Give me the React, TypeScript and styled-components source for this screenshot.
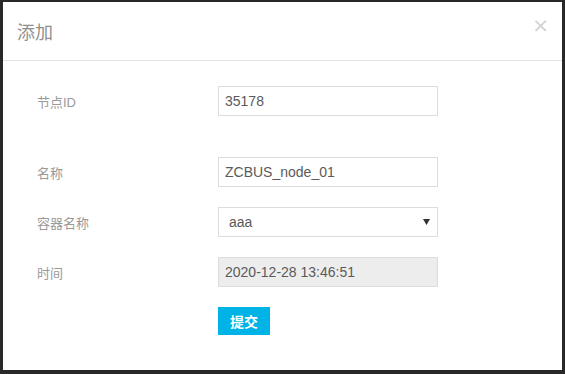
import React from "react";
import styled, { createGlobalStyle } from "styled-components";

const Global = createGlobalStyle`
  html, body { margin: 0; padding: 0; background: #2a2a2a; }
  body { font-family: "Liberation Sans", "Noto Sans CJK SC", Arial, sans-serif; }
  * { box-sizing: border-box; }
`;

const Backdrop = styled.div`
  width: 565px;
  height: 374px;
  padding: 2px 3px 0 3px;
  background: #282828;
  overflow: hidden;
`;

const Modal = styled.div`
  width: 559px;
  height: 368px;
  background: #fff;
  display: flex;
  flex-direction: column;
`;

const Header = styled.div`
  height: 59px;
  border-bottom: 1px solid #e5e5e5;
  display: flex;
  align-items: center;
  justify-content: space-between;
  padding: 0 13px 4px 14px;
`;

const Title = styled.h4`
  margin: 0;
  font-size: 18px;
  font-weight: normal;
  color: #8f8f8f;
  font-family: "Noto Sans CJK SC", sans-serif;
  line-height: 1;
  padding-top: 3px;
`;

const Close = styled.span`
  font-size: 20px;
  line-height: 1;
  color: #d2d2d2;
  font-family: "DejaVu Sans", sans-serif;
  margin-top: -9px;
`;

const Body = styled.div`
  padding: 25px 0 0 34px;
  display: flex;
  flex-direction: column;
`;

const Row = styled.div<{ $after: number }>`
  display: flex;
  align-items: center;
  margin-bottom: ${(p) => p.$after}px;
`;

const Label = styled.label`
  width: 181px;
  font-size: 13px;
  color: #999;
  font-family: "Liberation Sans", "Noto Sans CJK SC", sans-serif;
`;

const Field = styled.input<{ $disabled?: boolean }>`
  width: 220px;
  height: 30px;
  border: 1px solid #dcdcdc;
  padding: 0 6px;
  font-size: 14px;
  color: #5a5a5a;
  font-family: "Liberation Sans", sans-serif;
  background: ${(p) => (p.$disabled ? "#ededed" : "#fff")};
  outline: none;
  border-radius: 0;
`;

const SelectBox = styled.div`
  width: 220px;
  height: 30px;
  border: 1px solid #dcdcdc;
  padding: 0 6px 0 10px;
  display: flex;
  align-items: center;
  justify-content: space-between;
  font-size: 14px;
  color: #5a5a5a;
  font-family: "Liberation Sans", sans-serif;
`;

const Arrow = styled.svg`
  width: 7px;
  height: 6px;
  margin-right: 1px;
`;

const Submit = styled.button`
  margin-left: 181px;
  width: 52px;
  height: 28px;
  border: none;
  border-radius: 0;
  background: #00b3e6;
  color: #fff;
  font-size: 14px;
  font-weight: bold;
  font-family: "Noto Sans CJK SC", sans-serif;
  padding: 0;
  align-self: flex-start;
`;

export default function App() {
  return (
    <>
      <Global />
      <Backdrop>
        <Modal>
          <Header>
            <Title>添加</Title>
            <Close>×</Close>
          </Header>
          <Body>
            <Row $after={41}>
              <Label>节点ID</Label>
              <Field defaultValue="35178" />
            </Row>
            <Row $after={20}>
              <Label>名称</Label>
              <Field defaultValue="ZCBUS_node_01" />
            </Row>
            <Row $after={20}>
              <Label>容器名称</Label>
              <SelectBox>
                <span>aaa</span>
                <Arrow viewBox="0 0 7 6">
                  <path d="M0 0 H7 L3.5 6 Z" fill="#333" />
                </Arrow>
              </SelectBox>
            </Row>
            <Row $after={20}>
              <Label>时间</Label>
              <Field $disabled readOnly defaultValue="2020-12-28 13:46:51" />
            </Row>
            <Submit>提交</Submit>
          </Body>
        </Modal>
      </Backdrop>
    </>
  );
}
